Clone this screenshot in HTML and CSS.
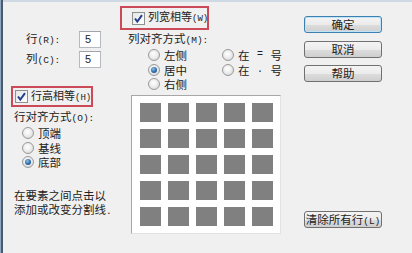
FILE: index.html
```html
<!DOCTYPE html>
<html>
<head>
<meta charset="utf-8">
<link rel="stylesheet" href="styles.css">
</head>
<body>
<div class="dialog">
  <div class="col-left">
    <div class="field"><span class="flabel">行<span class="a">(R):</span></span><span class="input">5</span></div>
    <div class="field"><span class="flabel">列<span class="a">(C):</span></span><span class="input">5</span></div>
    <div class="redbox rowbox">
      <span class="check"><svg width="13" height="13" viewBox="0 0 13 13"><path d="M3 6.5 L5.3 9.6 L10 3.2" fill="none" stroke="#24408e" stroke-width="2"/></svg></span>
      <span class="ctext">行高相等<span class="a">(H)</span></span>
    </div>
    <div class="title rtitle">行对齐方式<span class="a">(O):</span></div>
    <div class="radios rradios">
      <div class="ropt"><span class="radio"></span>顶端</div>
      <div class="ropt"><span class="radio"></span>基线</div>
      <div class="ropt"><span class="radio on"></span>底部</div>
    </div>
    <div class="help">
      <div class="hline">在要素之间点击以</div>
      <div class="hline">添加或改变分割线<span class="a">.</span></div>
    </div>
  </div>
  <div class="col-mid">
    <div class="redbox colbox">
      <span class="check"><svg width="13" height="13" viewBox="0 0 13 13"><path d="M3 6.5 L5.3 9.6 L10 3.2" fill="none" stroke="#24408e" stroke-width="2"/></svg></span>
      <span class="ctext">列宽相等<span class="a">(W)</span></span>
    </div>
    <div class="title ctitle">列对齐方式<span class="a">(M):</span></div>
    <div class="cradios">
      <div class="radios first">
        <div class="ropt"><span class="radio"></span>左侧</div>
        <div class="ropt"><span class="radio on"></span>居中</div>
        <div class="ropt"><span class="radio"></span>右侧</div>
      </div>
      <div class="radios">
        <div class="ropt"><span class="radio"></span>在<span class="sym">=</span>号</div>
        <div class="ropt"><span class="radio"></span>在<span class="sym">.</span>号</div>
      </div>
    </div>
    <div class="preview">
      <div class="grid">
        <i></i><i></i><i></i><i></i><i></i>
        <i></i><i></i><i></i><i></i><i></i>
        <i></i><i></i><i></i><i></i><i></i>
        <i></i><i></i><i></i><i></i><i></i>
        <i></i><i></i><i></i><i></i><i></i>
      </div>
    </div>
  </div>
  <div class="col-right">
    <div class="btn default">确定</div>
    <div class="btn">取消</div>
    <div class="btn">帮助</div>
    <div class="spacer"></div>
    <div class="btn clear">清除所有行<span class="a">(L)</span></div>
  </div>
</div>
</body>
</html>
```
FILE: styles.css
```css
html, body {
  margin: 0;
  padding: 0;
  background: #f0f0f0;
}
body {
  width: 412px;
  height: 253px;
  overflow: hidden;
  font-family: "Noto Sans CJK SC", "Noto Sans", sans-serif;
  font-size: 11.5px;
  color: #222;
}
.a {
  font-family: "Liberation Mono", monospace;
  font-size: 9.5px;
}
.dialog {
  box-sizing: border-box;
  width: 412px;
  height: 253px;
  padding-left: 3px;
  padding-top: 2px;
  background: #f0f0f0;
  box-shadow: inset 1px 0 #8fa9c4, inset 3px 0 #4c5a6b, inset 0 2px #cfd9e4;
  display: grid;
  grid-template-columns: 117px 170px 1fr;
}
.col-left {
  padding-top: 29px;
}
.field {
  display: flex;
  align-items: center;
  height: 17px;
  margin-bottom: 3px;
}
.flabel {
  width: 53px;
  padding-left: 23px;
  line-height: 13px;
  white-space: nowrap;
}
.input {
  box-sizing: border-box;
  width: 22px;
  height: 17px;
  background: #fff;
  border: 1px solid #b5b9c0;
  border-top-color: #a0a4ab;
  padding-left: 5px;
  line-height: 15px;
  font-family: "Liberation Sans", sans-serif;
  font-size: 11px;
}
.redbox {
  box-sizing: border-box;
  border: 2px solid #cc4a57;
  display: flex;
  align-items: center;
}
.rowbox {
  margin-top: 18px;
  margin-left: 8px;
  width: 82px;
  height: 21px;
  padding-left: 2px;
}
.colbox {
  margin-top: 4px;
  width: 89px;
  height: 24px;
  padding-left: 10px;
}
.check {
  box-sizing: border-box;
  width: 13px;
  height: 13px;
  border: 1px solid #8e8f8f;
  background: linear-gradient(135deg, #e6e6e6, #ffffff);
  display: flex;
  align-items: center;
  justify-content: center;
  margin-right: 3px;
  flex: none;
}
.check svg {
  display: block;
  flex: none;
}
.ctext {
  font-size: 11px;
  line-height: 13px;
  white-space: nowrap;
}
.ctext .a {
  font-size: 9px;
}
.title {
  line-height: 13px;
  white-space: nowrap;
}
.rtitle {
  margin-top: 3px;
  padding-left: 11px;
}
.ctitle {
  margin-top: 2px;
  padding-left: 8px;
}
.radios {
  display: flex;
  flex-direction: column;
}
.rradios {
  padding-left: 19px;
  margin-top: 1px;
}
.ropt {
  display: flex;
  align-items: center;
  height: 14.5px;
  line-height: 12px;
  white-space: nowrap;
}
.cradios {
  display: flex;
  padding-left: 28px;
  margin-top: 1px;
}
.cradios .first {
  width: 74px;
}
.radio {
  box-sizing: border-box;
  width: 12px;
  height: 12px;
  border-radius: 50%;
  border: 1px solid #9a9a9a;
  background: radial-gradient(circle at 45% 40%, #ffffff 0%, #f0f0f0 40%, #cfcfcf 100%);
  margin-right: 4px;
  display: flex;
  align-items: center;
  justify-content: center;
  flex: none;
}
.radio.on::after {
  content: "";
  width: 6px;
  height: 6px;
  border-radius: 50%;
  background: radial-gradient(circle at 40% 35%, #8fc2ea 0%, #2c6aa8 55%, #173f6b 100%);
}
.sym {
  display: inline-block;
  width: 21px;
  text-align: center;
  font-family: "Liberation Mono", monospace;
  font-size: 10px;
}
.help {
  margin-top: 18px;
  padding-left: 11px;
}
.hline {
  height: 14.5px;
  line-height: 14px;
  white-space: nowrap;
}
.preview {
  box-sizing: border-box;
  margin-top: 3px;
  margin-left: 11px;
  width: 150px;
  height: 139px;
  background: #fff;
  border: 1px solid #a8a8a8;
  border-right-color: #e2e2e2;
  border-bottom-color: #e2e2e2;
  padding: 7px 0 0 8px;
}
.grid {
  display: grid;
  grid-template-columns: repeat(5, 21px);
  grid-auto-rows: 19px;
  column-gap: 7px;
  row-gap: 7px;
}
.grid i {
  display: block;
  background: #808080;
}
.col-right {
  display: flex;
  flex-direction: column;
  padding-left: 14px;
  padding-top: 14px;
}
.btn {
  box-sizing: border-box;
  width: 78px;
  height: 17px;
  border: 1px solid #707070;
  border-radius: 3px;
  background: linear-gradient(#f4f4f4 0%, #ebebeb 50%, #dddddd 51%, #cfcfcf 100%);
  text-align: center;
  line-height: 15px;
  margin-bottom: 7px;
  white-space: nowrap;
}
.btn.default {
  border-color: #3c7fb1;
  box-shadow: inset 0 0 0 1px #bfe3f7;
  margin-bottom: 8px;
}
.spacer {
  height: 122px;
}
.btn.clear {
  height: 17px;
}
```
